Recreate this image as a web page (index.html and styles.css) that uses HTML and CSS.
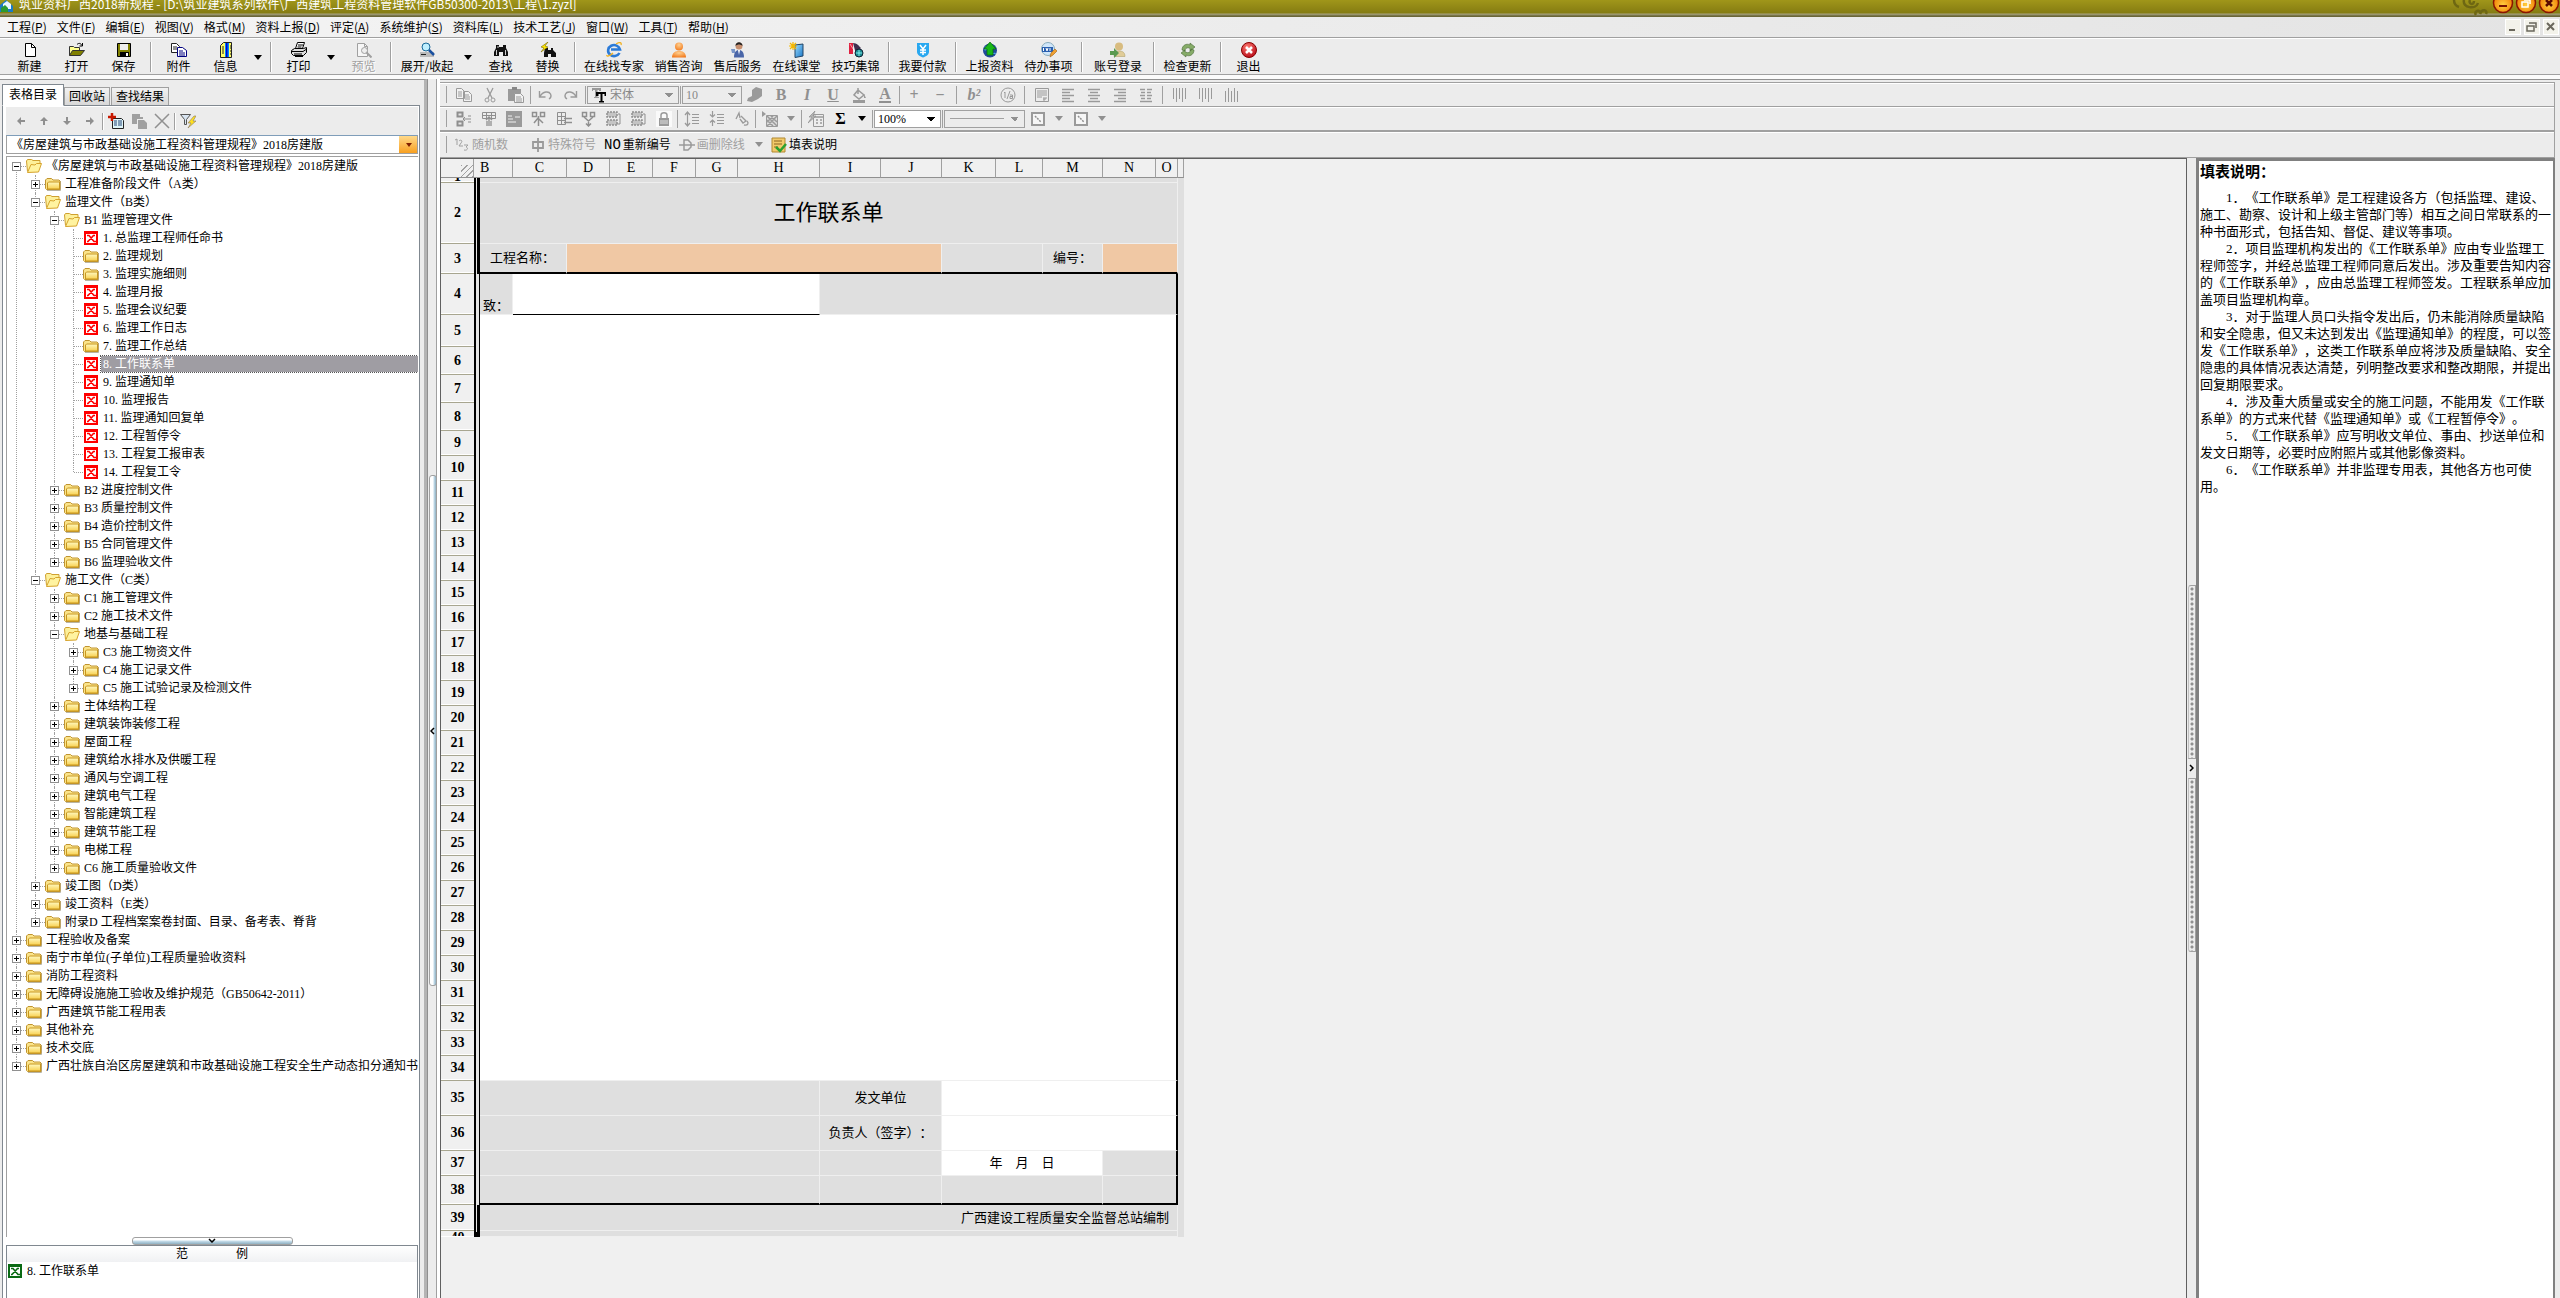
FILE: index.html
```html
<!DOCTYPE html>
<html lang="zh-CN">
<head>
<meta charset="utf-8">
<title>筑业资料广西2018新规程</title>
<link rel="stylesheet" href="styles.css">
</head>
<body>
<svg class="sprite" aria-hidden="true">
  <defs>
    <linearGradient id="gFold" x1="0" y1="0" x2="0" y2="1"><stop offset="0" stop-color="#fff9c0"/><stop offset="1" stop-color="#f8d050"/></linearGradient>
    <linearGradient id="gBlue" x1="0" y1="0" x2="1" y2="1"><stop offset="0" stop-color="#9fdcff"/><stop offset="1" stop-color="#1878c8"/></linearGradient>
    <radialGradient id="gRed" cx=".4" cy=".3" r=".8"><stop offset="0" stop-color="#ff7a70"/><stop offset="1" stop-color="#b00010"/></radialGradient>
    <radialGradient id="gOr" cx=".5" cy=".3" r=".8"><stop offset="0" stop-color="#ffd090"/><stop offset="1" stop-color="#f07010"/></radialGradient>
    <radialGradient id="gWin" cx=".5" cy=".6" r=".6"><stop offset="0" stop-color="#ffd040"/><stop offset="1" stop-color="#f07800"/></radialGradient>
  </defs>
  <symbol id="fold" viewBox="0 0 16 16"><path d="M2 14.5h13.500V5" fill="none" stroke="#b9b4a4"/><path d="M.5 12.500V4L2 2.500h4.500L8 4h6l1 1v8.500H1.500z" fill="#fbe48a" stroke="#c09430"/><path d="M2.500 13V7l1-1h11v7z" fill="url(#gFold)" stroke="#c8961e"/></symbol>
  <symbol id="open" viewBox="0 0 16 16"><path d="M1.500 13.500L.5 3l1-1.500h4l1.500 1h7v5" fill="#fdf09a" stroke="#cfa030"/><path d="M1.500 14.500L5 6.500l4 .5 1.500-1.500h5l-3 8.500z" fill="#fff3a0" stroke="#d6a32c"/></symbol>
  <symbol id="xr" viewBox="0 0 14 14"><path fill="#f00" d="M0 0h14v14H0z"/><path fill="#fff" d="M2 3h10v9H2z"/><path d="M3 4.500h2l5 6h2M9.500 4.500L4 10.500H3M9 4.500h2" stroke="#f00" stroke-width="1.600" fill="none"/></symbol>
  <symbol id="xg" viewBox="0 0 14 14"><path fill="#0a6a14" d="M0 0h14v14H0z"/><path fill="#fff" d="M2 3h10v9H2z"/><path d="M3 4.500h2l5 6h2M9.500 4.500L4 10.500H3M9 4.500h2" stroke="#0a6a14" stroke-width="1.600" fill="none"/></symbol>
  <symbol id="new" viewBox="0 0 16 16"><path d="M3.500 1.500h6l4 4v9h-10z" fill="#fff" stroke="#000"/><path d="M9.500 1.500v4h4" fill="none" stroke="#000"/></symbol>
  <symbol id="openf" viewBox="0 0 16 16"><path d="M.5 13.500v-9h4l1 1h5v3" fill="#ffff90" stroke="#333"/><path d="M.5 13.500l3-5h12l-4 5z" fill="#808000" stroke="#333"/><path d="M8 2.500c2-2 4-1 5 1M13.500 1v3h-3" fill="none" stroke="#000"/></symbol>
  <symbol id="save" viewBox="0 0 16 16"><path d="M1.500 1.500h13v13h-13z" fill="#808000" stroke="#000"/><path d="M4 2h8v6H4z" fill="#eee"/><path d="M4 10h9v5H4z" fill="#000"/><path d="M10 11h2v3h-2z" fill="#fff"/></symbol>
  <symbol id="att" viewBox="0 0 16 16"><path d="M.5 1.500h5l3 3v6h-8z" fill="#fff" stroke="#222"/><path d="M2 5h4M2 7h4" stroke="#222"/><path d="M6.500 5.500h5l4 3v6h-9z" fill="#fff" stroke="#000080"/><path d="M8 9h4M8 11h6M8 13h6" stroke="#000080"/></symbol>
  <symbol id="info" viewBox="0 0 16 16"><path d="M2.500 3.500l3-3h8v15h-11z" fill="#ff6" stroke="#222"/><path d="M7 1h4v14H7z" fill="#08f"/><path d="M8 1h1.500v14H8z" fill="#00c"/><path d="M4 5h2M4 7h2M4 9h2M4 11h2M12 4h1M12 6h1M12 9h1M12 12h1" stroke="#222"/></symbol>
  <symbol id="print" viewBox="0 0 16 16"><path d="M4.500 6.500l2-6h7l-2 6z" fill="#fff" stroke="#000"/><path d="M7 3h5M6.500 5h4" stroke="#000"/><path d="M.5 8.500l3-2h9l3-1v5l-3 3h-10l-2-2z" fill="#ddd" stroke="#000"/><path d="M1 9.500h11l3-2M3 12h8" stroke="#000" fill="none"/><path d="M4 14.500h8" stroke="#000"/></symbol>
  <symbol id="prev" viewBox="0 0 16 16"><path d="M1.500 1.500h7l3 3v10h-10z" fill="#f6f6f6" stroke="#a0a0a0"/><path d="M8.500 1.500v3h3" stroke="#a0a0a0" fill="none"/><circle cx="8.500" cy="8.500" r="3" fill="#eee" stroke="#a0a0a0"/><path d="M10.500 10.500l5 5" stroke="#a0a0a0" stroke-width="2"/></symbol>
  <symbol id="mag" viewBox="0 0 16 16"><path d="M1 10h14v5H1z" fill="#bbb"/><path d="M2 12.500h5" stroke="#222"/><circle cx="7" cy="5" r="4" fill="#bfefff" stroke="#1a6a9a"/><path d="M10 8l5 5" stroke="#1a50a0" stroke-width="2.500"/></symbol>
  <symbol id="bino" viewBox="0 0 16 16"><path d="M3 3h3v2h4V3h3v3l2 4v4h-5v-4H6v4H1v-4l2-4z" fill="#111"/><path d="M3.500 8v5M12.500 8v5M5 4v2" stroke="#fff" stroke-width=".8"/></symbol>
  <symbol id="repl" viewBox="0 0 16 16"><path d="M5 6h3v2h3V6h2v2l3 3v4h-5v-3H8v3H4v-4z" fill="#111"/><path d="M8 0L1 5l3 1-3 4 7-5-3-1z" fill="#ffe800" stroke="#7a6a00" stroke-width=".6"/></symbol>
  <symbol id="ie" viewBox="0 0 16 16"><path d="M13.500 11a6 5.500 0 1 1 .5-3.500H5" fill="none" stroke="#2a7ad8" stroke-width="2.600"/><path d="M1 13C0 15 4 14 7 11M10 2c3-2 6-2 5 1" fill="none" stroke="#f0b020" stroke-width="1.300"/></symbol>
  <symbol id="usr" viewBox="0 0 16 16"><circle cx="8" cy="4.500" r="4" fill="url(#gOr)"/><path d="M1 15.500C1 10 5 9 8 9s7 1 7 6.500z" fill="url(#gOr)"/></symbol>
  <symbol id="svc" viewBox="0 0 16 16"><circle cx="9" cy="4" r="3.500" fill="#c89070"/><path d="M5.500 4c0-5 7-5 7 0-2-2-5-2-7 0z" fill="#222"/><path d="M4 15.500C4 10 6 8 9 8s5 2 5 7.500z" fill="#4a66a8"/><path d="M8 8l1 5 1-5z" fill="#fff"/><path d="M1 7h4v4H2z" fill="#7a96c8"/></symbol>
  <symbol id="cls" viewBox="0 0 16 16"><path d="M6 3l8-1v12l-8 1.500z" fill="url(#gBlue)" stroke="#246"/><path d="M4 0v8M0 4h8M1 1l6 6M7 1L1 7" stroke="#f6b800" stroke-width="1.200"/></symbol>
  <symbol id="skill" viewBox="0 0 16 16"><path d="M1 1h4v11H1z" fill="#e02040"/><path d="M5 1c4 0 6 3 8 5l-5 6z" fill="#403050"/><path d="M2 2l7 11" stroke="#fff" stroke-width=".6"/><circle cx="11" cy="11" r="4" fill="#1a8a90" stroke="#123"/><path d="M8 11h6M11 8v6" stroke="#9ff" stroke-width=".8"/></symbol>
  <symbol id="pay" viewBox="0 0 16 16"><path d="M2 1h12v9c0 3-4 5-6 5.500C6 15 2 13 2 10z" fill="#29a8f0"/><path d="M5 3l3 4 3-4M8 7v6M5 8h6M5 10.500h6" stroke="#fff" stroke-width="1.500" fill="none"/></symbol>
  <symbol id="up" viewBox="0 0 16 16"><circle cx="8" cy="8.500" r="7" fill="#204a9a"/><path d="M3 5c2-2 3-1 3 1s-3 3-4 2M10 12c2-2 4-1 4 0" fill="#4aa0e8"/><path d="M8 0l6 7h-3v6H5V7H2z" fill="#18b818" stroke="#0a6a0a" stroke-width=".7"/></symbol>
  <symbol id="todo" viewBox="0 0 16 16"><circle cx="7" cy="7" r="6.500" fill="#cfe6fa" stroke="#8ab"/><path d="M1 5h11v5H1z" fill="#2a60b0"/><path d="M2.500 6v3M5 6l1 3 1-3M9 6v3" stroke="#fff" fill="none"/><path d="M9 15l1-4 4-4 2 2-4 4z" fill="#f0a030" stroke="#a06010" stroke-width=".6"/></symbol>
  <symbol id="acct" viewBox="0 0 16 16"><circle cx="9" cy="4.500" r="4" fill="#d8bc80"/><path d="M4 14.500C4 10 6 9 9 9s6 1 6 5.500z" fill="#e0cc98" stroke="#a89860" stroke-width=".5"/><path d="M0 9h4V6l5 5-5 5v-3H0z" fill="#5a9a50"/></symbol>
  <symbol id="upd" viewBox="0 0 16 16"><path d="M2 8c0-5 5-7 8-5V1l5 4-5 4V6.500C8 5 5 6 5 9zM14 8c0 5-5 7-8 5v2l-5-4 4-3v1.500C8 12 11 10 11 7z" fill="#86ac68" stroke="#4a6a38" stroke-width=".6"/></symbol>
  <symbol id="exit" viewBox="0 0 16 16"><circle cx="8" cy="8" r="7.500" fill="url(#gRed)" stroke="#800"/><path d="M5 5l6 6M11 5l-6 6" stroke="#fff" stroke-width="2.500"/></symbol>
  <symbol id="arr" viewBox="0 0 16 16"><path d="M4 8l4-4v3h4v2H8v3z" fill="#8f8f8f"/></symbol>
  <symbol id="addd" viewBox="0 0 16 16"><path d="M4.500 5.500h9l2 2v8h-11z" fill="#dff4f8" stroke="#222"/><path d="M6 8h3M10 8h4M6 10h3M10 10h4M6 12h3M10 12h4" stroke="#247"/><path d="M4 0v8M0 4h8" stroke="#c81800" stroke-width="2.500"/></symbol>
  <symbol id="cp2" viewBox="0 0 16 16"><path d="M1 1h8v3h3v2H6v5H1z" fill="#a0a0a0"/><path d="M7 7h6l3 3v6H7z" fill="#a0a0a0"/></symbol>
  <symbol id="del" viewBox="0 0 16 16"><path d="M1 1l14 14M15 1L1 15" stroke="#909090" stroke-width="1.500"/></symbol>
  <symbol id="filt" viewBox="0 0 16 16"><path d="M.5 1.500h10l-4 5v5h-2v-5z" fill="#d8e4f0" stroke="#555"/><path d="M14 3l-6 7h3l-3 5 8-7h-3l3-5z" fill="#ffe020" stroke="#876" stroke-width=".6"/></symbol>
  <symbol id="copy" viewBox="0 0 16 16"><path d="M.5 1.500h5l3 3v7h-8zM7.500 4.500h5l3 3v7h-8z" fill="#f2f2f2" stroke="#9a9a9a"/><path d="M2 5h4M2 7h4M2 9h4M9 8h4M9 10h5M9 12h5" stroke="#9a9a9a"/></symbol>
  <symbol id="cut" viewBox="0 0 16 16"><path d="M5 1l5 10M11 1L6 11" stroke="#9a9a9a" stroke-width="1.300"/><circle cx="5" cy="13" r="2" fill="none" stroke="#9a9a9a"/><circle cx="11" cy="13" r="2" fill="none" stroke="#9a9a9a"/></symbol>
  <symbol id="paste" viewBox="0 0 16 16"><path d="M0 2h13v12H0z" fill="#9a9a9a"/><path d="M4 0h5v3H4z" fill="#888"/><path d="M6.500 6.500h6l3 3v6h-9z" fill="#f2f2f2" stroke="#9a9a9a"/><path d="M8 10h5M8 12h6M8 14h6" stroke="#9a9a9a"/></symbol>
  <symbol id="undo" viewBox="0 0 16 16"><path d="M2.500 4v6h6M3 9.500C6 4 12 4 13.500 7c1 2 0 4-1.500 5" fill="none" stroke="#9a9a9a" stroke-width="1.400"/></symbol>
  <symbol id="tt" viewBox="0 0 16 16"><path d="M1 1h9v3H8V3H6.500v7H8v1H3v-1h1V3H2v1H1z" fill="#999"/><path d="M5 5h10v4h-1.500V7h-2v7H13v1.500H8V14h1.500V7h-2v2H5z" fill="#000"/></symbol>
  <symbol id="brush" viewBox="0 0 16 16"><path d="M5 3l4-3 6 2v7l-4 3-6 3-5-1 1-3 4-2z" fill="#9a9a9a"/></symbol>
  <symbol id="buck" viewBox="0 0 16 16"><path d="M2 13h12v3H2z" fill="#9a9a9a"/><path d="M7 1v6M7 3l6 5-5 4-5-4z" fill="none" stroke="#9a9a9a" stroke-width="1.500"/><path d="M13 7l2 4h-2z" fill="#9a9a9a"/></symbol>
  <symbol id="frac" viewBox="0 0 16 16"><circle cx="8" cy="8" r="7" fill="none" stroke="#9a9a9a"/><path d="M4 6l1-1v6M10 4l-3 8M10 8h2.500v3.500H10V9.500h2" fill="none" stroke="#9a9a9a"/></symbol>
  <symbol id="wrap" viewBox="0 0 16 16"><path d="M1.500 1.500h13v13h-13z" fill="none" stroke="#9a9a9a"/><path d="M3 4h10M3 6h10M3 8h10M3 10h5M12 10v2H9M10 10v4" stroke="#9a9a9a" fill="none"/></symbol>
  <symbol id="al" viewBox="0 0 16 16"><path d="M2 2.500h12M2 5.500h8M2 8.500h12M2 11.500h8M2 14.500h12" stroke="#9a9a9a" stroke-width="1.500"/></symbol>
  <symbol id="ac" viewBox="0 0 16 16"><path d="M2 2.500h12M4 5.500h8M2 8.500h12M4 11.500h8M2 14.500h12" stroke="#9a9a9a" stroke-width="1.500"/></symbol>
  <symbol id="aj" viewBox="0 0 16 16"><path d="M2 2.500h5M9 2.500h5M3 5.500h4M9 5.500h4M2 8.500h5M9 8.500h5M3 11.500h4M9 11.500h4M2 14.500h12" stroke="#9a9a9a" stroke-width="1.500"/></symbol>
  <symbol id="bars" viewBox="0 0 16 16"><path d="M1.500 1v11M4.500 1v14M7.500 1v11M10.500 1v14M13.500 1v11" stroke="#9a9a9a"/></symbol>
  <symbol id="ins" viewBox="0 0 16 16"><path d="M1.500 1.500h5v4h-5zM1.500 10.500h5v4h-5z" fill="#e4e4e4" stroke="#8f8f8f" stroke-width="2"/><path d="M7 8h8M9 6L7 8l2 2M15 5h-3M15 11h-3" stroke="#8f8f8f" fill="none"/></symbol>
  <symbol id="gridi" viewBox="0 0 16 16"><path d="M1.500 1.500h13v6h-13zM1.500 4.500h13M5.500 1v7M10.500 1v7" fill="none" stroke="#8f8f8f"/><path d="M8 6v9M5 9l3-3 3 3M6 10v5M10 10v5" fill="none" stroke="#8f8f8f" stroke-width="1.300"/></symbol>
  <symbol id="blk" viewBox="0 0 16 16"><path d="M0 0h16v16H0z" fill="#9a9a9a"/><path d="M2 5h4M2 8h5M9 6h5M2 11h8" stroke="#f0f0f0"/></symbol>
  <symbol id="split" viewBox="0 0 16 16"><path d="M1.500 1.500h4v4h-4zM9.500 1.500h4v4h-4z" fill="none" stroke="#8f8f8f" stroke-width="1.500"/><path d="M7.500 5v10M3 12l4-5 5 5" fill="none" stroke="#8f8f8f" stroke-width="1.500"/></symbol>
  <symbol id="merge" viewBox="0 0 16 16"><path d="M1.500 1.500h4v4h-4zM9.500 1.500h4v4h-4z" fill="none" stroke="#8f8f8f" stroke-width="1.500"/><path d="M3 6l4.500 4L12 6M7.500 9v6M5 12.500l2.500 2.500 2.500-2.500" fill="none" stroke="#8f8f8f" stroke-width="1.500"/></symbol>
  <symbol id="coli" viewBox="0 0 16 16"><path d="M1.500 1.500h8v12h-8zM1.500 5.500h8M1.500 9.500h8M5.500 1v13" fill="none" stroke="#8f8f8f"/><path d="M8 7.500h8M8 11.500h8" stroke="#8f8f8f" stroke-width="1.500"/></symbol>
  <symbol id="hat" viewBox="0 0 16 16"><path d="M1 1h10v5H1zM1 9h10v5H1z" fill="#c4c4c4" stroke="#8f8f8f" stroke-width="1.500" stroke-dasharray="2 1"/><path d="M12 3h2v10h-3" fill="none" stroke="#8f8f8f"/></symbol>
  <symbol id="lock" viewBox="0 0 16 16"><path d="M0 0h16v16H0z" fill="#fafafa"/><path d="M5 8V4c0-3 6-3 6 0v4" fill="none" stroke="#9a9a9a" stroke-width="1.500"/><path d="M3 7h10v8H3z" fill="#9a9a9a"/><path d="M4 10h8M4 12h8" stroke="#ddd"/></symbol>
  <symbol id="lh" viewBox="0 0 16 16"><path d="M3.500 1v14M1 4l2.500-3L6 4M1 12l2.500 3L6 12M8 3.500h7M8 6.500h7M8 9.500h7M8 12.500h7" fill="none" stroke="#9a9a9a" stroke-width="1.200"/></symbol>
  <symbol id="lh2" viewBox="0 0 16 16"><path d="M3.500 0v6M1 3.500L3.500 6 6 3.500M3.500 15V9M1 11.500L3.500 9 6 11.500M8 3.500h7M8 6.500h7M8 9.500h7M8 12.500h7" fill="none" stroke="#9a9a9a" stroke-width="1.200"/></symbol>
  <symbol id="abc" viewBox="0 0 16 16"><path d="M2 8l3-6 1 5M7 5l5 5-3 2-3-4M10 14c4 1 5-2 3-4" fill="none" stroke="#9a9a9a" stroke-width="1.300"/></symbol>
  <symbol id="pat" viewBox="0 0 16 16"><path d="M0 0l4 3-4 3z" fill="#9a9a9a"/><path d="M4.500 4.500h11v11h-11z" fill="#ddd" stroke="#9a9a9a"/><path d="M5 5l10 10M9 5l6 6M5 9l6 6M15 5L5 15M11 5l-6 6" stroke="#9a9a9a" stroke-width="1.500"/></symbol>
  <symbol id="calc" viewBox="0 0 16 16"><path d="M5.500 3.500h10v12h-10z" fill="#eee" stroke="#9a9a9a"/><path d="M6 6h9M8 9h2M12 9h2M8 12h2M12 12h2" stroke="#9a9a9a" stroke-width="1.500"/><path d="M7 0L1 6h3l-4 6 8-7H5z" fill="#b4b4b4" stroke="#8f8f8f" stroke-width=".7"/></symbol>
  <symbol id="bord" viewBox="0 0 16 16"><path d="M2 2h12v12H2z" fill="#f6f6f6" stroke="#9a9a9a" stroke-width="2"/><path d="M5 5l6 6" stroke="#8f8f8f" stroke-width="1.500" stroke-dasharray="2 1"/></symbol>
  <symbol id="n123" viewBox="0 0 16 16"><path d="M1 3l2-1v6M5 4c2-2 4 0 2 2L5 9h4M10 8h4l-2 2c3 1 1 4-2 3" fill="none" stroke="#a0a0a0"/></symbol>
  <symbol id="phi" viewBox="0 0 16 16"><path d="M3 5h10v6H3zM8 1v14" fill="none" stroke="#9a9a9a" stroke-width="1.800"/></symbol>
  <symbol id="strk" viewBox="0 0 16 16"><path d="M5 3h4l3 3v4l-3 3H5zM0 8h16" fill="none" stroke="#9a9a9a" stroke-width="1.500"/></symbol>
  <symbol id="note" viewBox="0 0 16 16"><path d="M1 1h13v14H1z" fill="#f2ca6a" stroke="#b08830"/><path d="M3 4h8M3 7h8M3 10h4" stroke="#8a6420"/><path d="M5 10l4 4 6-7" fill="none" stroke="#2aa030" stroke-width="2.500"/></symbol>
</svg>

<header class="title">
  <svg class="applogo" viewBox="0 0 14 12"><path d="M0 5l6-5 7 6v6H0z" fill="#1a7ac8"/><path d="M3 4l4-3 4 3v5H3z" fill="#e8f6ff"/><path d="M1 8l4-3 3 3v4H1z" fill="#2c9a30"/></svg>
  <h1>筑业资料广西2018新规程 - [D:\筑业建筑系列软件\广西建筑工程资料管理软件GB50300-2013\工程\1.zyzl]</h1>
  <svg class="swirl" viewBox="0 0 40 16"><path d="M4 0c0 3 2 6 5 7M14 0c-2 8 12 10 14 3M20 0c-2 4 4 6 4 1M30 14c2-6 8-4 6 0M26 15c-2-3 2-6 4-3" fill="none" stroke="#6e6712" stroke-width="2.500"/></svg>
  <div class="winbtns">
    <button aria-label="最小化"><svg viewBox="0 0 22 14"><circle cx="11" cy="3" r="9.500" fill="url(#gWin)" stroke="#8a1400" stroke-width="1.500"/><path d="M7 6h8" stroke="#7a1400" stroke-width="2"/></svg></button>
    <button aria-label="还原"><svg viewBox="0 0 22 14"><circle cx="11" cy="3" r="9.500" fill="url(#gWin)" stroke="#8a1400" stroke-width="1.500"/><path d="M7 2h6v5H7zM9 0h6v4" fill="none" stroke="#fff" stroke-width="1.500"/></svg></button>
    <button aria-label="关闭"><svg viewBox="0 0 22 14"><circle cx="11" cy="3" r="9.500" fill="url(#gWin)" stroke="#8a1400" stroke-width="1.500"/><path d="M8 0l6 6M14 0L8 6" stroke="#5a0a00" stroke-width="2.500"/></svg></button>
  </div>
</header>

<nav class="menu">
  <button>工程(<u>P</u>)</button><button>文件(<u>F</u>)</button><button>编辑(<u>E</u>)</button><button>视图(<u>V</u>)</button><button>格式(<u>M</u>)</button><button>资料上报(<u>D</u>)</button><button>评定(<u>A</u>)</button><button>系统维护(<u>S</u>)</button><button>资料库(<u>L</u>)</button><button>技术工艺(<u>J</u>)</button><button>窗口(<u>W</u>)</button><button>工具(<u>T</u>)</button><button>帮助(<u>H</u>)</button>
  <div class="mdi">
    <button aria-label="最小化窗口"><svg viewBox="0 0 14 14"><path d="M3 10h6" stroke="#6a675c" stroke-width="2"/></svg></button>
    <button aria-label="还原窗口"><svg viewBox="0 0 14 14"><path d="M2 6h7v5H2zM4 3h7v5" fill="none" stroke="#6a675c" stroke-width="1.500"/></svg></button>
    <button aria-label="关闭窗口"><svg viewBox="0 0 14 14"><path d="M3 3l7 7M10 3l-7 7" stroke="#6a675c" stroke-width="2"/></svg></button>
  </div>
</nav>

<div class="tools">
  <button class="tb"><svg><use href="#new"/></svg>新建</button><button class="tb"><svg><use href="#openf"/></svg>打开</button><button class="tb"><svg><use href="#save"/></svg>保存</button><i class="sp"></i>
  <button class="tb"><svg><use href="#att"/></svg>附件</button><button class="tb"><svg><use href="#info"/></svg>信息</button><button class="dd" aria-label="信息选项"></button><i class="sp"></i>
  <button class="tb"><svg><use href="#print"/></svg>打印</button><button class="dd" aria-label="打印选项"></button><button class="tb off" disabled><svg><use href="#prev"/></svg>预览</button><i class="sp"></i>
  <button class="tb mid"><svg><use href="#mag"/></svg>展开/收起</button><button class="dd" aria-label="展开选项"></button><button class="tb"><svg><use href="#bino"/></svg>查找</button><button class="tb"><svg><use href="#repl"/></svg>替换</button><i class="sp"></i>
  <button class="tb xwide"><svg><use href="#ie"/></svg>在线找专家</button><button class="tb wide"><svg><use href="#usr"/></svg>销售咨询</button><button class="tb wide"><svg><use href="#svc"/></svg>售后服务</button><button class="tb wide"><svg><use href="#cls"/></svg>在线课堂</button><button class="tb wide"><svg><use href="#skill"/></svg>技巧集锦</button><i class="sp"></i>
  <button class="tb wide"><svg><use href="#pay"/></svg>我要付款</button><i class="sp"></i>
  <button class="tb wide"><svg><use href="#up"/></svg>上报资料</button><button class="tb wide"><svg><use href="#todo"/></svg>待办事项</button><i class="sp"></i>
  <button class="tb mid"><svg><use href="#acct"/></svg>账号登录</button><i class="sp"></i>
  <button class="tb wide"><svg><use href="#upd"/></svg>检查更新</button><i class="sp"></i>
  <button class="tb"><svg><use href="#exit"/></svg>退出</button>
</div>

<main class="work">
  <aside class="left">
    <div class="tabs"><button class="on">表格目录</button><button>回收站</button><button>查找结果</button></div>
    <div class="pane">
      <div class="mini">
        <button aria-label="后退"><svg><use href="#arr"/></svg></button><button aria-label="上移"><svg class="r90"><use href="#arr"/></svg></button><button aria-label="下移"><svg class="r270"><use href="#arr"/></svg></button><button aria-label="前进"><svg class="r180"><use href="#arr"/></svg></button><i class="sp"></i>
        <button aria-label="新增"><svg><use href="#addd"/></svg></button><button aria-label="复制"><svg><use href="#cp2"/></svg></button><button aria-label="删除"><svg><use href="#del"/></svg></button><i class="sp"></i><button aria-label="筛选"><svg><use href="#filt"/></svg></button>
      </div>
      <select class="std" aria-label="规程"><option>《房屋建筑与市政基础设施工程资料管理规程》2018房建版</option></select>
      <div class="treebox">
      <ul class="tree">
        <li><div class="row"><button class="tg m" aria-label="收起"></button><svg><use href="#open"/></svg><span>《房屋建筑与市政基础设施工程资料管理规程》2018房建版</span></div>
          <ul>
            <li><div class="row"><button class="tg" aria-label="展开"></button><svg><use href="#fold"/></svg><span>工程准备阶段文件（A类）</span></div></li>
            <li><div class="row"><button class="tg m" aria-label="收起"></button><svg><use href="#open"/></svg><span>监理文件（B类）</span></div>
              <ul>
                <li><div class="row"><button class="tg m" aria-label="收起"></button><svg><use href="#open"/></svg><span>B1 监理管理文件</span></div>
                  <ul>
                    <li><div class="row leaf"><svg class="x"><use href="#xr"/></svg><span>1. 总监理工程师任命书</span></div></li>
                    <li><div class="row leaf"><svg><use href="#fold"/></svg><span>2. 监理规划</span></div></li>
                    <li><div class="row leaf"><svg><use href="#fold"/></svg><span>3. 监理实施细则</span></div></li>
                    <li><div class="row leaf"><svg class="x"><use href="#xr"/></svg><span>4. 监理月报</span></div></li>
                    <li><div class="row leaf"><svg class="x"><use href="#xr"/></svg><span>5. 监理会议纪要</span></div></li>
                    <li><div class="row leaf"><svg class="x"><use href="#xr"/></svg><span>6. 监理工作日志</span></div></li>
                    <li><div class="row leaf"><svg><use href="#fold"/></svg><span>7. 监理工作总结</span></div></li>
                    <li><div class="row leaf sel"><svg class="x"><use href="#xr"/></svg><span>8. 工作联系单</span></div></li>
                    <li><div class="row leaf"><svg class="x"><use href="#xr"/></svg><span>9. 监理通知单</span></div></li>
                    <li><div class="row leaf"><svg class="x"><use href="#xr"/></svg><span>10. 监理报告</span></div></li>
                    <li><div class="row leaf"><svg class="x"><use href="#xr"/></svg><span>11. 监理通知回复单</span></div></li>
                    <li><div class="row leaf"><svg class="x"><use href="#xr"/></svg><span>12. 工程暂停令</span></div></li>
                    <li><div class="row leaf"><svg class="x"><use href="#xr"/></svg><span>13. 工程复工报审表</span></div></li>
                    <li><div class="row leaf"><svg class="x"><use href="#xr"/></svg><span>14. 工程复工令</span></div></li>
                  </ul>
                </li>
                <li><div class="row"><button class="tg" aria-label="展开"></button><svg><use href="#fold"/></svg><span>B2 进度控制文件</span></div></li>
                <li><div class="row"><button class="tg" aria-label="展开"></button><svg><use href="#fold"/></svg><span>B3 质量控制文件</span></div></li>
                <li><div class="row"><button class="tg" aria-label="展开"></button><svg><use href="#fold"/></svg><span>B4 造价控制文件</span></div></li>
                <li><div class="row"><button class="tg" aria-label="展开"></button><svg><use href="#fold"/></svg><span>B5 合同管理文件</span></div></li>
                <li><div class="row"><button class="tg" aria-label="展开"></button><svg><use href="#fold"/></svg><span>B6 监理验收文件</span></div></li>
              </ul>
            </li>
            <li><div class="row"><button class="tg m" aria-label="收起"></button><svg><use href="#open"/></svg><span>施工文件（C类）</span></div>
              <ul>
                <li><div class="row"><button class="tg" aria-label="展开"></button><svg><use href="#fold"/></svg><span>C1 施工管理文件</span></div></li>
                <li><div class="row"><button class="tg" aria-label="展开"></button><svg><use href="#fold"/></svg><span>C2 施工技术文件</span></div></li>
                <li><div class="row"><button class="tg m" aria-label="收起"></button><svg><use href="#open"/></svg><span>地基与基础工程</span></div>
                  <ul>
                    <li><div class="row"><button class="tg" aria-label="展开"></button><svg><use href="#fold"/></svg><span>C3 施工物资文件</span></div></li>
                    <li><div class="row"><button class="tg" aria-label="展开"></button><svg><use href="#fold"/></svg><span>C4 施工记录文件</span></div></li>
                    <li><div class="row"><button class="tg" aria-label="展开"></button><svg><use href="#fold"/></svg><span>C5 施工试验记录及检测文件</span></div></li>
                  </ul>
                </li>
                <li><div class="row"><button class="tg" aria-label="展开"></button><svg><use href="#fold"/></svg><span>主体结构工程</span></div></li>
                <li><div class="row"><button class="tg" aria-label="展开"></button><svg><use href="#fold"/></svg><span>建筑装饰装修工程</span></div></li>
                <li><div class="row"><button class="tg" aria-label="展开"></button><svg><use href="#fold"/></svg><span>屋面工程</span></div></li>
                <li><div class="row"><button class="tg" aria-label="展开"></button><svg><use href="#fold"/></svg><span>建筑给水排水及供暖工程</span></div></li>
                <li><div class="row"><button class="tg" aria-label="展开"></button><svg><use href="#fold"/></svg><span>通风与空调工程</span></div></li>
                <li><div class="row"><button class="tg" aria-label="展开"></button><svg><use href="#fold"/></svg><span>建筑电气工程</span></div></li>
                <li><div class="row"><button class="tg" aria-label="展开"></button><svg><use href="#fold"/></svg><span>智能建筑工程</span></div></li>
                <li><div class="row"><button class="tg" aria-label="展开"></button><svg><use href="#fold"/></svg><span>建筑节能工程</span></div></li>
                <li><div class="row"><button class="tg" aria-label="展开"></button><svg><use href="#fold"/></svg><span>电梯工程</span></div></li>
                <li><div class="row"><button class="tg" aria-label="展开"></button><svg><use href="#fold"/></svg><span>C6 施工质量验收文件</span></div></li>
              </ul>
            </li>
            <li><div class="row"><button class="tg" aria-label="展开"></button><svg><use href="#fold"/></svg><span>竣工图（D类）</span></div></li>
            <li><div class="row"><button class="tg" aria-label="展开"></button><svg><use href="#fold"/></svg><span>竣工资料（E类）</span></div></li>
            <li><div class="row"><button class="tg" aria-label="展开"></button><svg><use href="#fold"/></svg><span>附录D 工程档案案卷封面、目录、备考表、脊背</span></div></li>
          </ul>
        </li>
        <li><div class="row"><button class="tg" aria-label="展开"></button><svg><use href="#fold"/></svg><span>工程验收及备案</span></div></li>
        <li><div class="row"><button class="tg" aria-label="展开"></button><svg><use href="#fold"/></svg><span>南宁市单位(子单位)工程质量验收资料</span></div></li>
        <li><div class="row"><button class="tg" aria-label="展开"></button><svg><use href="#fold"/></svg><span>消防工程资料</span></div></li>
        <li><div class="row"><button class="tg" aria-label="展开"></button><svg><use href="#fold"/></svg><span>无障碍设施施工验收及维护规范（GB50642-2011）</span></div></li>
        <li><div class="row"><button class="tg" aria-label="展开"></button><svg><use href="#fold"/></svg><span>广西建筑节能工程用表</span></div></li>
        <li><div class="row"><button class="tg" aria-label="展开"></button><svg><use href="#fold"/></svg><span>其他补充</span></div></li>
        <li><div class="row"><button class="tg" aria-label="展开"></button><svg><use href="#fold"/></svg><span>技术交底</span></div></li>
        <li><div class="row"><button class="tg" aria-label="展开"></button><svg><use href="#fold"/></svg><span>广西壮族自治区房屋建筑和市政基础设施工程安全生产动态扣分通知书</span></div></li>
      </ul>
      </div>
      <button class="hsplit" aria-label="收起范例"><svg viewBox="0 0 8 5"><path d="M1 1l3 3 3-3" fill="none" stroke="#000" stroke-width="1.500"/></svg></button>
      <section class="sample">
        <h2><span>范</span><span>例</span></h2>
        <p><svg class="x"><use href="#xg"/></svg>8. 工作联系单</p>
      </section>
    </div>
  </aside>

  <div class="vsplit"><button aria-label="收起目录"><svg viewBox="0 0 5 8"><path d="M4 1L1 4l3 3" fill="none" stroke="#000" stroke-width="1.500"/></svg></button></div>

  <section class="right">
    <div class="bar">
      <button class="fb" aria-label="复制"><svg><use href="#copy"/></svg></button><button class="fb" aria-label="剪切"><svg><use href="#cut"/></svg></button><button class="fb" aria-label="粘贴"><svg><use href="#paste"/></svg></button><i class="s3"></i>
      <button class="fb" aria-label="撤消"><svg><use href="#undo"/></svg></button><button class="fb" aria-label="恢复"><svg class="flip"><use href="#undo"/></svg></button><i class="s3"></i>
      <div class="fontbox"><svg><use href="#tt"/></svg><select aria-label="字体" disabled><option>宋体</option></select></div><i class="s3"></i>
      <select class="size" aria-label="字号" disabled><option>10</option></select>
      <button class="fb" aria-label="格式刷"><svg><use href="#brush"/></svg></button><button class="fb"><b>B</b></button><button class="fb"><b><em>I</em></b></button><button class="fb"><b><u>U</u></b></button><button class="fb" aria-label="填充"><svg><use href="#buck"/></svg></button><button class="fb"><b class="ua">A</b></button><i class="s3"></i>
      <button class="fb"><b>+</b></button><button class="fb"><b>−</b></button><i class="s8"></i><button class="fb"><b><em>b²</em></b></button><i class="s8"></i><button class="fb" aria-label="分数"><svg><use href="#frac"/></svg></button><i class="s8"></i>
      <button class="fb" aria-label="换行"><svg><use href="#wrap"/></svg></button><button class="fb" aria-label="左对齐"><svg><use href="#al"/></svg></button><button class="fb" aria-label="居中"><svg><use href="#ac"/></svg></button><button class="fb" aria-label="右对齐"><svg class="flip"><use href="#al"/></svg></button><button class="fb" aria-label="分散对齐"><svg><use href="#aj"/></svg></button><i class="s8"></i>
      <button class="fb" aria-label="顶端对齐"><svg><use href="#bars"/></svg></button><button class="fb" aria-label="垂直居中"><svg><use href="#bars"/></svg></button><button class="fb" aria-label="底端对齐"><svg class="vflip"><use href="#bars"/></svg></button>
    </div>
    <div class="bar two">
      <button class="fc" aria-label="插入行"><svg><use href="#ins"/></svg></button><button class="fc" aria-label="插入列"><svg><use href="#gridi"/></svg></button><button class="fc" aria-label="单元格"><svg><use href="#blk"/></svg></button><button class="fc" aria-label="拆分"><svg><use href="#split"/></svg></button><button class="fc" aria-label="删除行"><svg><use href="#coli"/></svg></button><button class="fc" aria-label="合并"><svg><use href="#merge"/></svg></button><button class="fc" aria-label="上方填充"><svg><use href="#hat"/></svg></button><button class="fc" aria-label="下方填充"><svg><use href="#hat"/></svg></button><button class="fc" aria-label="锁定"><svg><use href="#lock"/></svg></button><i class="s3"></i>
      <button class="fc" aria-label="增大行距"><svg><use href="#lh"/></svg></button><button class="fc" aria-label="减小行距"><svg><use href="#lh2"/></svg></button><button class="fc" aria-label="文字方向"><svg><use href="#abc"/></svg></button><i class="s3"></i>
      <button class="fc" aria-label="图片"><svg><use href="#pat"/></svg></button><button class="dd off" aria-label="图片选项"></button><i class="s3"></i>
      <button class="fc" aria-label="计算"><svg><use href="#calc"/></svg></button><button class="fc"><b class="blk">Σ</b></button><button class="dd" aria-label="求和选项"></button><i class="s3"></i>
      <select class="zoom" aria-label="显示比例"><option>100%</option></select><i class="s3"></i>
      <select class="line" aria-label="线型" disabled><option></option></select>
      <button class="fc" aria-label="边框"><svg><use href="#bord"/></svg></button><button class="dd off" aria-label="边框选项"></button><button class="fc" aria-label="斜线"><svg><use href="#bord"/></svg></button><button class="dd off" aria-label="斜线选项"></button>
    </div>
    <div class="bar three">
      <button class="lb off"><svg><use href="#n123"/></svg>随机数</button><button class="lb off gapl"><svg><use href="#phi"/></svg>特殊符号</button><button class="lb"><span class="no">NO</span>重新编号</button><button class="lb off"><svg><use href="#strk"/></svg>画删除线</button><button class="dd off" aria-label="删除线选项"></button><button class="lb"><svg><use href="#note"/></svg>填表说明</button>
    </div>

    <div class="body">
      <div class="sheetwrap">
        <table class="sheet">
          <colgroup><col class="c33"><col class="c6"><col class="c33"><col class="c54"><col class="c43"><col class="c43"><col class="c43"><col class="c42"><col class="c82"><col class="c61"><col class="c61"><col class="c54"><col class="c47"><col class="c60"><col class="c53"><col class="c22"><col class="c6"></colgroup>
          <thead><tr><th class="corner"></th><th class="hid"></th><th class="bcol">B</th><th>C</th><th>D</th><th>E</th><th>F</th><th>G</th><th>H</th><th>I</th><th>J</th><th>K</th><th>L</th><th>M</th><th>N</th><th>O</th><th></th></tr></thead>
          <tbody>
          <tr class="h5"><th><div>1</div></th><td class="a hot" rowspan="3"></td><td colspan="14"></td><td class="z" rowspan="3"></td></tr>
          <tr class="h61"><th>2</th><td colspan="14" class="head">工作联系单</td></tr>
          <tr class="h30 cut"><th>3</th><td colspan="2" class="lab">工程名称：</td><td colspan="7" class="pe"></td><td colspan="2"></td><td>编号：</td><td colspan="2" class="pe"></td></tr>
          <tr class="h41"><th>4</th><td class="a" rowspan="35"></td><td class="to">致：</td><td colspan="6" class="wh ul"></td><td colspan="7" class="e"></td><td class="z" rowspan="35"></td></tr>
          <tr class="h32"><th>5</th><td colspan="14" rowspan="30" class="wh e"></td></tr>
          <tr class="h28"><th>6</th></tr><tr class="h28"><th>7</th></tr><tr class="h28"><th>8</th></tr>
          <tr class="h25"><th>9</th></tr><tr class="h25"><th>10</th></tr><tr class="h25"><th>11</th></tr><tr class="h25"><th>12</th></tr><tr class="h25"><th>13</th></tr><tr class="h25"><th>14</th></tr><tr class="h25"><th>15</th></tr><tr class="h25"><th>16</th></tr><tr class="h25"><th>17</th></tr><tr class="h25"><th>18</th></tr><tr class="h25"><th>19</th></tr><tr class="h25"><th>20</th></tr><tr class="h25"><th>21</th></tr><tr class="h25"><th>22</th></tr><tr class="h25"><th>23</th></tr><tr class="h25"><th>24</th></tr><tr class="h25"><th>25</th></tr><tr class="h25"><th>26</th></tr><tr class="h25"><th>27</th></tr><tr class="h25"><th>28</th></tr><tr class="h25"><th>29</th></tr><tr class="h25"><th>30</th></tr><tr class="h25"><th>31</th></tr><tr class="h25"><th>32</th></tr><tr class="h25"><th>33</th></tr><tr class="h25"><th>34</th></tr>
          <tr class="h35"><th>35</th><td colspan="7"></td><td colspan="2">发文单位</td><td colspan="5" class="wh e"></td></tr>
          <tr class="h35"><th>36</th><td colspan="7"></td><td colspan="2">负责人（签字）：</td><td colspan="5" class="wh e"></td></tr>
          <tr class="h25"><th>37</th><td colspan="7"></td><td colspan="2"></td><td colspan="3" class="wh date">年&emsp;月&emsp;日</td><td colspan="2" class="e"></td></tr>
          <tr class="h29 cut"><th>38</th><td colspan="7"></td><td colspan="2"></td><td colspan="3"></td><td colspan="2" class="e"></td></tr>
          <tr class="h26"><th>39</th><td class="a hot knob" rowspan="2"></td><td colspan="14" class="foot">广西建设工程质量安全监督总站编制</td><td class="z" rowspan="2"></td></tr>
          <tr class="h6"><th><div>40</div></th><td colspan="14"></td></tr>
          </tbody>
        </table>
      </div>
      <div class="nsplit"><i></i><button aria-label="收起说明"><svg viewBox="0 0 5 8"><path d="M1 1l3 3-3 3" fill="none" stroke="#000" stroke-width="1.500"/></svg></button><i></i></div>
      <article class="notes">
        <h2>填表说明：</h2>
        <p>1．《工作联系单》是工程建设各方（包括监理、建设、施工、勘察、设计和上级主管部门等）相互之间日常联系的一种书面形式，包括告知、督促、建议等事项。</p>
        <p>2．项目监理机构发出的《工作联系单》应由专业监理工程师签字，并经总监理工程师同意后发出。涉及重要告知内容的《工作联系单》，应由总监理工程师签发。工程联系单应加盖项目监理机构章。</p>
        <p>3．对于监理人员口头指令发出后，仍未能消除质量缺陷和安全隐患，但又未达到发出《监理通知单》的程度，可以签发《工作联系单》，这类工作联系单应将涉及质量缺陷、安全隐患的具体情况表达清楚，列明整改要求和整改期限，并提出回复期限要求。</p>
        <p>4．涉及重大质量或安全的施工问题，不能用发《工作联系单》的方式来代替《监理通知单》或《工程暂停令》。</p>
        <p>5．《工作联系单》应写明收文单位、事由、抄送单位和发文日期等，必要时应附照片或其他影像资料。</p>
        <p>6．《工作联系单》并非监理专用表，其他各方也可使用。</p>
      </article>
    </div>
  </section>
</main>
</body>
</html>
```

FILE: styles.css
```css
* { box-sizing: border-box; }
html, body { height: 100%; }
body {
  margin: 0; display: flex; flex-direction: column; overflow: hidden;
  background: #ececec; color: #000;
  font: 12px/16px "Liberation Serif", "Noto Sans CJK SC", sans-serif;
  text-spacing-trim: space-all;
}
button, select { font: inherit; color: inherit; margin: 0; padding: 0; border: 0; background: none; border-radius: 0; }
h1, h2, p, ul { margin: 0; padding: 0; font-weight: normal; list-style: none; }
svg { display: block; width: 16px; height: 16px; flex: none; }
.sprite { position: absolute; width: 0; height: 0; }
.x { width: 14px; height: 14px; margin: 0 1px; }
.flip, .r180 { transform: scaleX(-1); }
.vflip { transform: scaleY(-1); }
.r90 { transform: rotate(90deg); }
.r270 { transform: rotate(270deg); }

/* title bar */
.title {
  flex: none; display: flex; align-items: flex-start; height: 17px; overflow: hidden;
  background: linear-gradient(#a0961a, #857c12 13px, #a8a480 14px, #6b6738 16px);
}
.applogo { width: 14px; height: 12px; margin-right: 5px; }
.title h1 { flex: 1; font: 12px/8px "Noto Sans CJK SC", sans-serif; color: #fff; white-space: nowrap; }
.swirl { width: 40px; height: 16px; margin-right: 2px; }
.winbtns { display: flex; gap: 1px; }
.winbtns button, .winbtns svg { width: 22px; height: 14px; }

/* menu */
.menu {
  flex: none; display: flex; align-items: center; height: 21px; padding-left: 2px;
  font-family: "Noto Sans CJK SC", sans-serif;
  background: linear-gradient(90deg, #f4f4f4, #e4e4e4); border-bottom: 1px solid #a0a0a0;
}
.menu > button { padding: 0 5px; line-height: 18px; }
.mdi { margin-left: auto; display: flex; gap: 5px; padding-right: 2px; }
.mdi button { width: 14px; height: 14px; background: #f3f2ea; box-shadow: 0 0 0 1px #fff; }
.mdi svg { width: 14px; height: 14px; }

/* main toolbar */
.tools {
  flex: none; display: flex; align-items: stretch; height: 37px; padding: 3px 0 2px 6px;
  border-top: 1px solid #fff; border-bottom: 1px solid #a0a0a0;
  font-family: "Noto Sans CJK SC", sans-serif;
}
.tb { width: 47px; display: flex; flex-direction: column; align-items: center; line-height: 15px; white-space: nowrap; }
.tb.wide { width: 59px; }
.tb.mid { width: 64px; }
.tb.xwide { width: 70px; }
.off { color: #a0a0a0; }
.tb.off { text-shadow: 1px 1px #fff; }
.dd { width: 18px; display: flex; align-items: center; justify-content: center; }
.dd::before { content: ""; border: 4px solid transparent; border-top: 5px solid #000; border-bottom: 0; }
.dd.off::before { border-top-color: #909090; }
.sp { width: 8px; flex: none; background: linear-gradient(#a0a0a0, #a0a0a0) 3px 0 / 1px 100% no-repeat, linear-gradient(#fff, #fff) 4px 0 / 1px 100% no-repeat; }

/* workspace */
.work { flex: 1; min-height: 0; display: grid; grid-template-columns: 427px 13px minmax(0, 1fr); border-top: 4px solid #fbfbfb; }
.left { display: flex; flex-direction: column; min-height: 0; border-top: 1px solid #909090; border-right: 3px solid #b4b4b4; padding: 4px 4px 0 2px; background: #ececec; }
.tabs { display: flex; align-items: flex-end; height: 22px; margin-bottom: -1px; }
.tabs button { height: 19px; padding: 0 4px; border: 1px solid #a0a0a0; border-bottom-color: #808890; margin-right: 1px; line-height: 16px; background: linear-gradient(#f2f2f2, #d8d8d8); }
.tabs .on { height: 22px; padding: 0 6px; margin: 0; background: #fff; border-color: #808890 #808890 #fff; z-index: 1; }
.pane { position: relative; flex: 1; min-height: 0; display: flex; flex-direction: column; padding: 1px 1px 0 3px; background: #fff; border: 1px solid #808890; border-bottom: 0; }
.pane::after { content: ""; position: absolute; right: 7px; top: 37px; border: 3px solid transparent; border-top: 4px solid #802000; border-bottom: 0; pointer-events: none; }
.mini { flex: none; display: flex; align-items: center; height: 28px; padding-left: 3px; background: #ececec; }
.mini button { width: 23px; display: flex; justify-content: center; }
.mini .sp { width: 3px; height: 17px; background-position: 1px 0, 2px 0; }
.std {
  flex: none; height: 19px; padding-left: 4px; appearance: none; border: 1px solid #a0a0a0; border-top-color: #7f9db9;
  background: linear-gradient(#ffd98a, #f8a020) right center / 18px 17px no-repeat #fff;
}
.treebox { flex: 1; min-height: 0; margin-top: 2px; overflow: hidden; border: 1px solid #a0a0a0; border-width: 1px 0 0 1px; }
.tree li { position: relative; }
.tree li::before { content: ""; position: absolute; left: 9px; top: 0; bottom: 0; border-left: 1px dotted #a0a0a0; }
.tree li:last-child::before { bottom: auto; height: 9px; }
.tree > li:first-child::before { top: 9px; }
.tree ul { margin-left: 19px; }
.row { display: flex; align-items: center; height: 18px; padding-left: 5px; position: relative; white-space: nowrap; }
.row::before { content: ""; position: absolute; left: 10px; width: 9px; top: 9px; border-top: 1px dotted #a0a0a0; }
.row svg { position: relative; }
.tg { position: relative; width: 9px; height: 9px; flex: none; border: 1px solid #909090; margin-right: 5px;
  background: linear-gradient(#000, #000) 1px 3px / 5px 1px no-repeat, linear-gradient(#000, #000) 3px 1px / 1px 5px no-repeat #fff; }
.tg.m { background: linear-gradient(#000, #000) 1px 3px / 5px 1px no-repeat #fff; }
.leaf { padding-left: 19px; }
.row span { padding-left: 4px; line-height: 16px; }
.sel span { flex: 1; margin-left: 2px; padding-left: 2px; background: #9f9da3; color: #fff; outline: 1px dotted #555; }
.hsplit { flex: none; align-self: center; display: flex; justify-content: center; width: 161px; height: 8px; border: 1px solid #a0a0a0; border-radius: 3px; background: linear-gradient(#fff 2px, #c8dfec 3px, #8fb0c2); }
.hsplit svg { width: 8px; height: 5px; }
.sample { flex: none; height: 53px; border: 1px solid #808890; border-bottom: 0; }
.sample h2 { display: flex; justify-content: center; gap: 48px; height: 16px; font-size: 12px; background: linear-gradient(#fff, #f0f1f3); }
.sample p { display: flex; align-items: center; gap: 4px; height: 18px; }

.vsplit { display: flex; flex-direction: column; justify-content: center; align-items: center; padding-top: 84px; border-left: 1px solid #909090; border-right: 3px solid #fff; box-shadow: inset -1px 0 #a0a0a0; }
.vsplit button { width: 8px; height: 45%; display: flex; align-items: center; border: 1px solid #a0a0a0; border-radius: 3px; background: linear-gradient(90deg, #fff 3px, #c4dcea 4px, #8fb0c2); }
.vsplit svg { width: 5px; height: 8px; }

/* edit toolbars */
.right { display: flex; flex-direction: column; min-width: 0; min-height: 0; border-top: 1px solid #909090; padding: 2px 5px 0 0; }
.bar { flex: none; display: flex; align-items: center; height: 25px; padding-left: 11px; border: 1px solid #a0a0a0; border-left: 0; box-shadow: inset 0 1px #fff;
  background: linear-gradient(#a0a0a0, #a0a0a0) 6px center / 1px 17px no-repeat; }
.bar + .bar { border-top: 0; height: 24px; }
.bar + .bar.three { height: 27px; border-top: 1px solid #a0a0a0; }
.fb { width: 26px; display: flex; justify-content: center; color: #909090; font-size: 16px; line-height: 16px; }
.fc { width: 25px; display: flex; justify-content: center; }
.ua { line-height: 14px; border-bottom: 2px solid #909090; }
.blk { font-size: 16px; line-height: 16px; }
.s3, .s8 { flex: none; width: 3px; height: 18px; background: linear-gradient(#a0a0a0, #a0a0a0) 1px 0 / 1px 100% no-repeat; }
.s8 { width: 8px; background-position: 3px 0; }
.bar select, .fontbox { height: 18px; appearance: none; border: 1px solid #a0a0a0; }
.fontbox { width: 92px; display: flex; align-items: center; padding-left: 3px; }
.bar select {
  padding-left: 3px; opacity: 1; color: #888; line-height: 16px;
  background: linear-gradient(45deg, transparent 50%, #909090 0) right 9px center / 4px 4px no-repeat, linear-gradient(-45deg, transparent 50%, #909090 0) right 5px center / 4px 4px no-repeat;
}
.bar select { background: conic-gradient(from -45deg at 50% 100%, #909090 90deg, transparent 0) right 5px center / 9px 5px no-repeat; }
.bar .fontbox select { flex: 1; border: 0; height: 16px; }
.bar .size { width: 60px; }
.bar .zoom { width: 67px; color: #000; background-color: #fff; }
.bar .line { width: 81px; }
.bar .size, .bar .line, .bar .fontbox select { background: linear-gradient(to bottom left, #909090 50%, transparent 50%) right 9px center / 0 0 no-repeat; }
.bar .fontbox select, .bar .size, .bar .zoom, .bar .line {
  background-image: linear-gradient(to top right, transparent 50%, #909090 50%), linear-gradient(to top left, transparent 50%, #909090 50%);
  background-position: right 9px center, right 5px center; background-size: 4px 4px, 4px 4px; background-repeat: no-repeat;
}
.bar .zoom { background-image: linear-gradient(to top right, transparent 50%, #000 50%), linear-gradient(to top left, transparent 50%, #000 50%); }
.bar .line {
  background-image: linear-gradient(to top right, transparent 50%, #909090 50%), linear-gradient(to top left, transparent 50%, #909090 50%), linear-gradient(#a0a0a0, #a0a0a0);
  background-position: right 9px center, right 5px center, 5px center; background-size: 4px 4px, 4px 4px, 54px 1px;
}
.lb { display: flex; align-items: center; gap: 2px; padding: 0 5px 0 3px; white-space: nowrap; }
.lb.gapl { margin-left: 14px; }
.no { font: 14px/16px "Liberation Mono", monospace; }

/* worksheet */
.body { flex: 1; min-height: 0; display: grid; grid-template-columns: minmax(0, 1fr) 9px 359px; }
.sheetwrap { background: #f0f0f0; border: 1px solid #606060; border-bottom: 0; overflow: hidden; }
.sheet { table-layout: fixed; border-collapse: separate; border-spacing: 0; width: 742px; font-size: 13px; line-height: 16px; }
.sheet th, .sheet td { padding: 0; }
.c6 { width: 6px; } .c22 { width: 22px; } .c33 { width: 33px; } .c42 { width: 42px; } .c43 { width: 43px; } .c47 { width: 47px; } .c53 { width: 53px; } .c54 { width: 54px; } .c60 { width: 60px; } .c61 { width: 61px; } .c82 { width: 82px; }
thead th { height: 19px; font-weight: normal; border-right: 1px solid #a0a0a0; border-bottom: 1px solid #909090; font-size: 14px; }
thead .hid { border-right: 0; }
thead .bcol { text-align: left; }
.corner { background: repeating-linear-gradient(135deg, #a0a0a0 0 1px, transparent 1px 4px) right bottom / 12px 12px no-repeat; }
tbody th { font-size: 14px; border-bottom: 1px solid #a8a690; box-shadow: inset 0 -1px #fff; }
tbody th div { height: 4px; overflow: hidden; display: flex; justify-content: center; align-items: flex-end; line-height: 11px; }
.h6 th div { align-items: flex-start; line-height: 12px; }
.sheet .h6 th { border-bottom: 0; }
tbody td { background: #dfdfdf; border-right: 1px solid #efefef; border-bottom: 1px solid #efefef; text-align: center; }
.h5 { height: 5px; } .h6 { height: 6px; } .h25 { height: 25px; } .h26 { height: 26px; } .h28 { height: 28px; } .h29 { height: 29px; } .h30 { height: 30px; } .h32 { height: 32px; } .h35 { height: 35px; } .h41 { height: 41px; } .h61 { height: 61px; }
.head { font-size: 22px; line-height: 28px; }
.pe { background: #f0c8a4; }
.wh { background: #fff; }
.sheet .ul { border-bottom: 1px solid #000; }
.sheet .e { border-right: 2px solid #000; }
.cut td { border-bottom: 2px solid #000; }
.sheet .a { border: solid #000; border-width: 0 1px 0 2px; background: #e6e6e6; }
.sheet .hot { border-right-width: 3px; }
.sheet .knob { background: linear-gradient(#000, #000) 0 100% / 100% 5px no-repeat #e6e6e6; }
.sheet .z { border: 0; }
.sheet .lab { text-align: left; padding-left: 10px; }
.sheet .to { vertical-align: bottom; text-align: left; padding-left: 3px; }
.sheet .foot { text-align: right; padding-right: 8px; }

/* notes */
.nsplit { display: flex; flex-direction: column; align-items: center; justify-content: center; padding-top: 80px; }
.nsplit i { width: 8px; height: 174px; border: 1px solid #a0a0a0; border-left-color: #c0c0c0; border-radius: 3px 0 0 0; background: radial-gradient(circle at 3px 3px, #909090 1px, transparent 2px) 0 0 / 6px 5px; }
.nsplit i:last-child { border-radius: 0 0 0 3px; }
.nsplit button { height: 19px; display: flex; align-items: center; }
.nsplit svg { width: 5px; height: 8px; }
.notes { background: #fff; border: 3px solid #808080; border-right-width: 2px; border-bottom: 0; padding: 1px 2px 0 1px; font-size: 13px; line-height: 17px; overflow: hidden; }
.notes h2 { font-size: 15px; font-weight: bold; line-height: 20px; margin-bottom: 7px; }
.notes p { text-indent: 26px; }
```
